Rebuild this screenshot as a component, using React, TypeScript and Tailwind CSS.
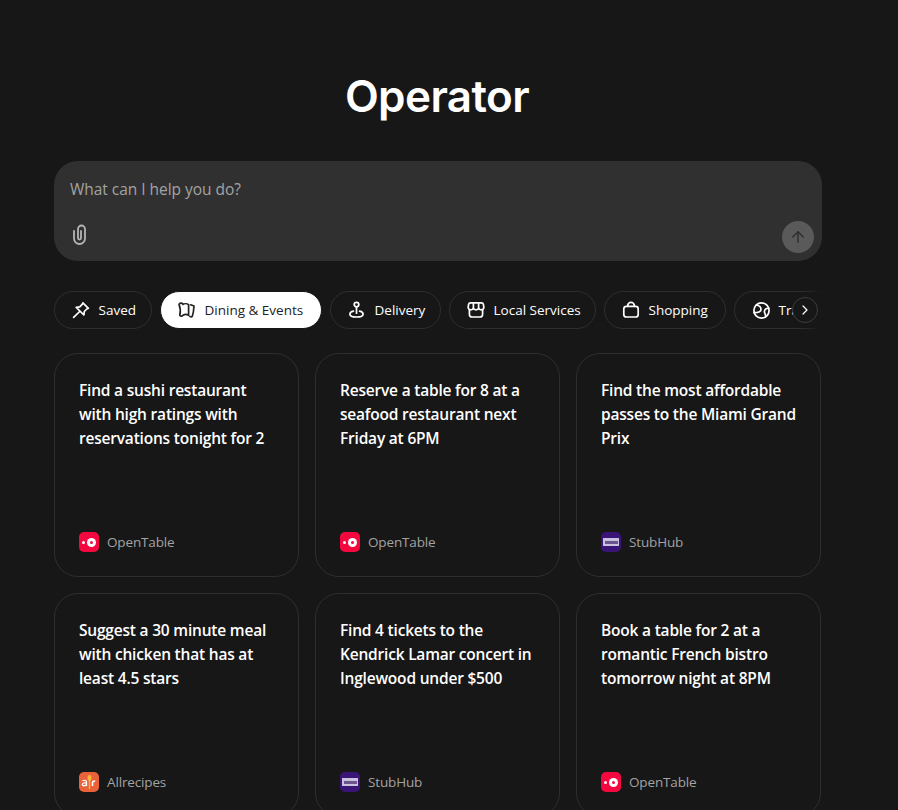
import React from "react";
import { ArrowUp, ChevronRight } from "lucide-react";

const Ic = ({ children }: { children: React.ReactNode }) => (
  <svg width="20" height="20" viewBox="0 0 20 20" fill="none" stroke="currentColor" strokeWidth="1.7" strokeLinecap="round" strokeLinejoin="round" className="shrink-0">
    {children}
  </svg>
);

const Pin = () => (
  <Ic>
    <path d="M11.900 2.800 17.400 8.300 15.800 9 13.300 11.500 12.900 15 5.200 7.300 8.700 6.900 11.200 4.400Z" />
    <path d="M8.700 11.500 2.600 17.400" />
  </Ic>
);
const MapI = () => (
  <Ic>
    <path d="M2 4.300C3.500 2.600 5.300 3 6 4.400 7.200 3.500 10 3.500 11.600 4.600V15.300C10 14.300 7.400 14.300 6 15.300 4.800 16.500 3.600 16.300 2.800 15.200 3.600 12 3.400 8 2 4.300Z" />
    <path d="M13.600 4.800 17 6C16.800 9.400 16.400 12.900 15.300 16.200 14.700 17 13.600 16.900 12.800 16.400" />
  </Ic>
);
const Delivery = () => (
  <Ic>
    <circle cx="9.500" cy="4.600" r="2.300" />
    <path d="M9.500 7v6.200" />
    <path d="M6.400 11.200C4 11.700 2.900 12.700 2.900 14.200 2.900 15.900 5.900 17 9.500 17S16.100 15.900 16.100 14.200C16.100 12.700 15 11.700 12.600 11.200" />
  </Ic>
);
const Store = () => (
  <Ic>
    <path d="M4.600 2.800h10.800c1 0 1.800.6 2 1.600l.4 2.800c0 1.600-1.200 2.600-2.600 2.600-1.200 0-2.200-.6-2.600-1.600-.4 1-1.400 1.600-2.600 1.600s-2.200-.6-2.600-1.600c-.4 1-1.400 1.600-2.600 1.600C3.400 9.800 2.200 8.800 2.200 7.200l.4-2.800c.2-1 1-1.600 2-1.600Z" />
    <path d="M7.400 3v5.500M12.600 3v5.500" />
    <path d="M3.400 9.800v4.400c0 1.600 1.200 2.800 2.800 2.800h7.600c1.600 0 2.800-1.200 2.800-2.800V9.800" />
  </Ic>
);
const Bag = () => (
  <Ic>
    <rect x="2.800" y="6.300" width="14.400" height="10.700" rx="2.600" />
    <path d="M6.700 6.300V5.600a3.300 3.300 0 0 1 6.600 0V6.300" />
  </Ic>
);
const Globe = () => (
  <Ic>
    <circle cx="10.500" cy="10.500" r="7.600" />
    <path d="M5.400 5c2.500.5 4.600 2 4.600 4.400 0 2.500-3 3.200-7 3.200" />
    <path d="M17.900 8.300c-2.500-.3-4.500 1-4.500 3.200 0 2 1.600 3 1.200 5.300" />
  </Ic>
);
const Clip = () => (
  <svg width="18" height="24" viewBox="0 0 18 24" fill="none" stroke="currentColor" strokeWidth="1.800" strokeLinecap="round" strokeLinejoin="round" className="mb-[6px] ml-[1px]">
    <path d="M3 9V16.500a5.500 5.500 0 0 0 11 0V7a3.500 3.500 0 0 0-7 0V16a1.500 1.500 0 0 0 3 0V9" />
  </svg>
);

const chips = [
  { label: "Saved", icon: <Pin />, w: "w-[98px]" },
  { label: "Dining & Events", icon: <MapI />, active: true, w: "w-[162px]" },
  { label: "Delivery", icon: <Delivery />, w: "w-[111px]" },
  { label: "Local Services", icon: <Store />, w: "w-[147px]" },
  { label: "Shopping", icon: <Bag />, w: "w-[122px]" },
  { label: "Travel", icon: <Globe />, w: "w-[100px]" },
];

const OpenTableLogo = () => (
  <span className="flex h-5 w-5 shrink-0 items-center justify-center gap-[2px] rounded-[5px] bg-[#f5083f]">
    <span className="h-[3px] w-[3px] rounded-full bg-white" />
    <span className="flex h-[9px] w-[9px] items-center justify-center rounded-full bg-white">
      <span className="h-[3px] w-[3px] rounded-full bg-[#f5083f]" />
    </span>
  </span>
);
const StubHubLogo = () => (
  <span className="flex h-5 w-5 shrink-0 items-center justify-center rounded-[5px] bg-[#3b1478]">
    <span className="flex h-[8px] w-[16px] items-center justify-center bg-[#c9c1de]">
      <span className="h-[3px] w-[13px] bg-[#6a558f]" />
    </span>
  </span>
);
const AllrecipesLogo = () => (
  <span className="flex h-5 w-5 shrink-0 items-center justify-center rounded-[5px] bg-[#e9623a]">
    <svg width="20" height="20" viewBox="0 0 20 20">
      <ellipse cx="10.500" cy="6" rx="2" ry="3" fill="#f4b63f" />
      <rect x="9.800" y="8" width="1.400" height="9" fill="#f4b63f" />
      <path d="M3.500 8.800C5 8 7.500 8.300 7.500 10V14M7.500 11C5.500 10.500 3.300 11 3.300 12.500 3.300 14 6 14.200 7.500 12.800" fill="none" stroke="#fff" strokeWidth="1.300" />
      <path d="M13.500 14V10.500C13.500 9.500 14.500 9 16.200 9" fill="none" stroke="#fff" strokeWidth="1.600" />
    </svg>
  </span>
);

const cards = [
  { text: "Find a sushi restaurant with high ratings with reservations tonight for 2", site: "OpenTable", logo: <OpenTableLogo /> },
  { text: "Reserve a table for 8 at a seafood restaurant next Friday at 6PM", site: "OpenTable", logo: <OpenTableLogo /> },
  { text: "Find the most affordable passes to the Miami Grand Prix", site: "StubHub", logo: <StubHubLogo /> },
  { text: "Suggest a 30 minute meal with chicken that has at least 4.5 stars", site: "Allrecipes", logo: <AllrecipesLogo /> },
  { text: "Find 4 tickets to the Kendrick Lamar concert in Inglewood under $500", site: "StubHub", logo: <StubHubLogo /> },
  { text: "Book a table for 2 at a romantic French bistro tomorrow night at 8PM", site: "OpenTable", logo: <OpenTableLogo /> },
];

export default function App() {
  return (
    <div className="h-screen overflow-hidden bg-[#171717] font-['Open_Sans',sans-serif] text-white">
      <div className="ml-[54px] w-[768px] pt-[70px]">
        <h1 className="pr-[2px] text-center font-['Inter',sans-serif] text-[44px] leading-[53px] font-semibold tracking-[-0.6px] text-white">
          Operator
        </h1>
        <div className="mt-[38px] flex h-[100px] flex-col justify-between rounded-3xl bg-[#303030] pt-[16px] pr-2 pb-2 pl-4">
          <div className="text-[15.5px] leading-6 tracking-[-0.03px] text-[#a3a3a3]">What can I help you do?</div>
          <div className="flex items-center justify-between text-[#b4b4b4]">
            <Clip />
            <button className="flex h-8 w-8 items-center justify-center rounded-full bg-[#5a5a5a] text-[#2f2f2f]">
              <ArrowUp size={18} strokeWidth={2} />
            </button>
          </div>
        </div>
        <div className="relative mt-[30px]">
          <div className="flex gap-2 overflow-hidden">
            {chips.map((c) => (
              <div
                key={c.label}
                className={
                  c.w +
                  (c.active
                    ? " flex h-[38px] shrink-0 items-center gap-[7.5px] rounded-full border border-[#171717] bg-white pl-4 text-[13.5px] text-[#222222]"
                    : " flex h-[38px] shrink-0 items-center gap-[7.5px] rounded-full border border-[#2e2e2e] pl-4 text-[13.5px] text-white")
                }
              >
                {c.icon}
                <span>{c.label}</span>
              </div>
            ))}
          </div>
          <div className="absolute top-0 right-0 h-[38px] w-[20px] bg-gradient-to-r from-transparent to-[#171717]" />
          <button className="absolute top-[6px] right-[4px] flex h-[26px] w-[26px] items-center justify-center rounded-full border border-[#3d3d3d] bg-[#171717] text-white">
            <ChevronRight size={16} strokeWidth={1.8} />
          </button>
        </div>
        <div className="mt-6 grid w-[767px] grid-cols-3 gap-4">
          {cards.map((c) => (
            <div key={c.text} className="flex h-[224px] flex-col justify-between rounded-3xl border border-[#2e2e2e] pt-[24px] pr-[19px] pb-6 pl-6">
              <p className="text-[15.5px] leading-6 font-semibold tracking-[-0.2px] text-white">{c.text}</p>
              <div className="flex items-center gap-2 text-[13.5px] leading-5 tracking-[-0.15px] text-[#a3a3a3]">
                {c.logo}
                <span>{c.site}</span>
              </div>
            </div>
          ))}
        </div>
      </div>
    </div>
  );
}
